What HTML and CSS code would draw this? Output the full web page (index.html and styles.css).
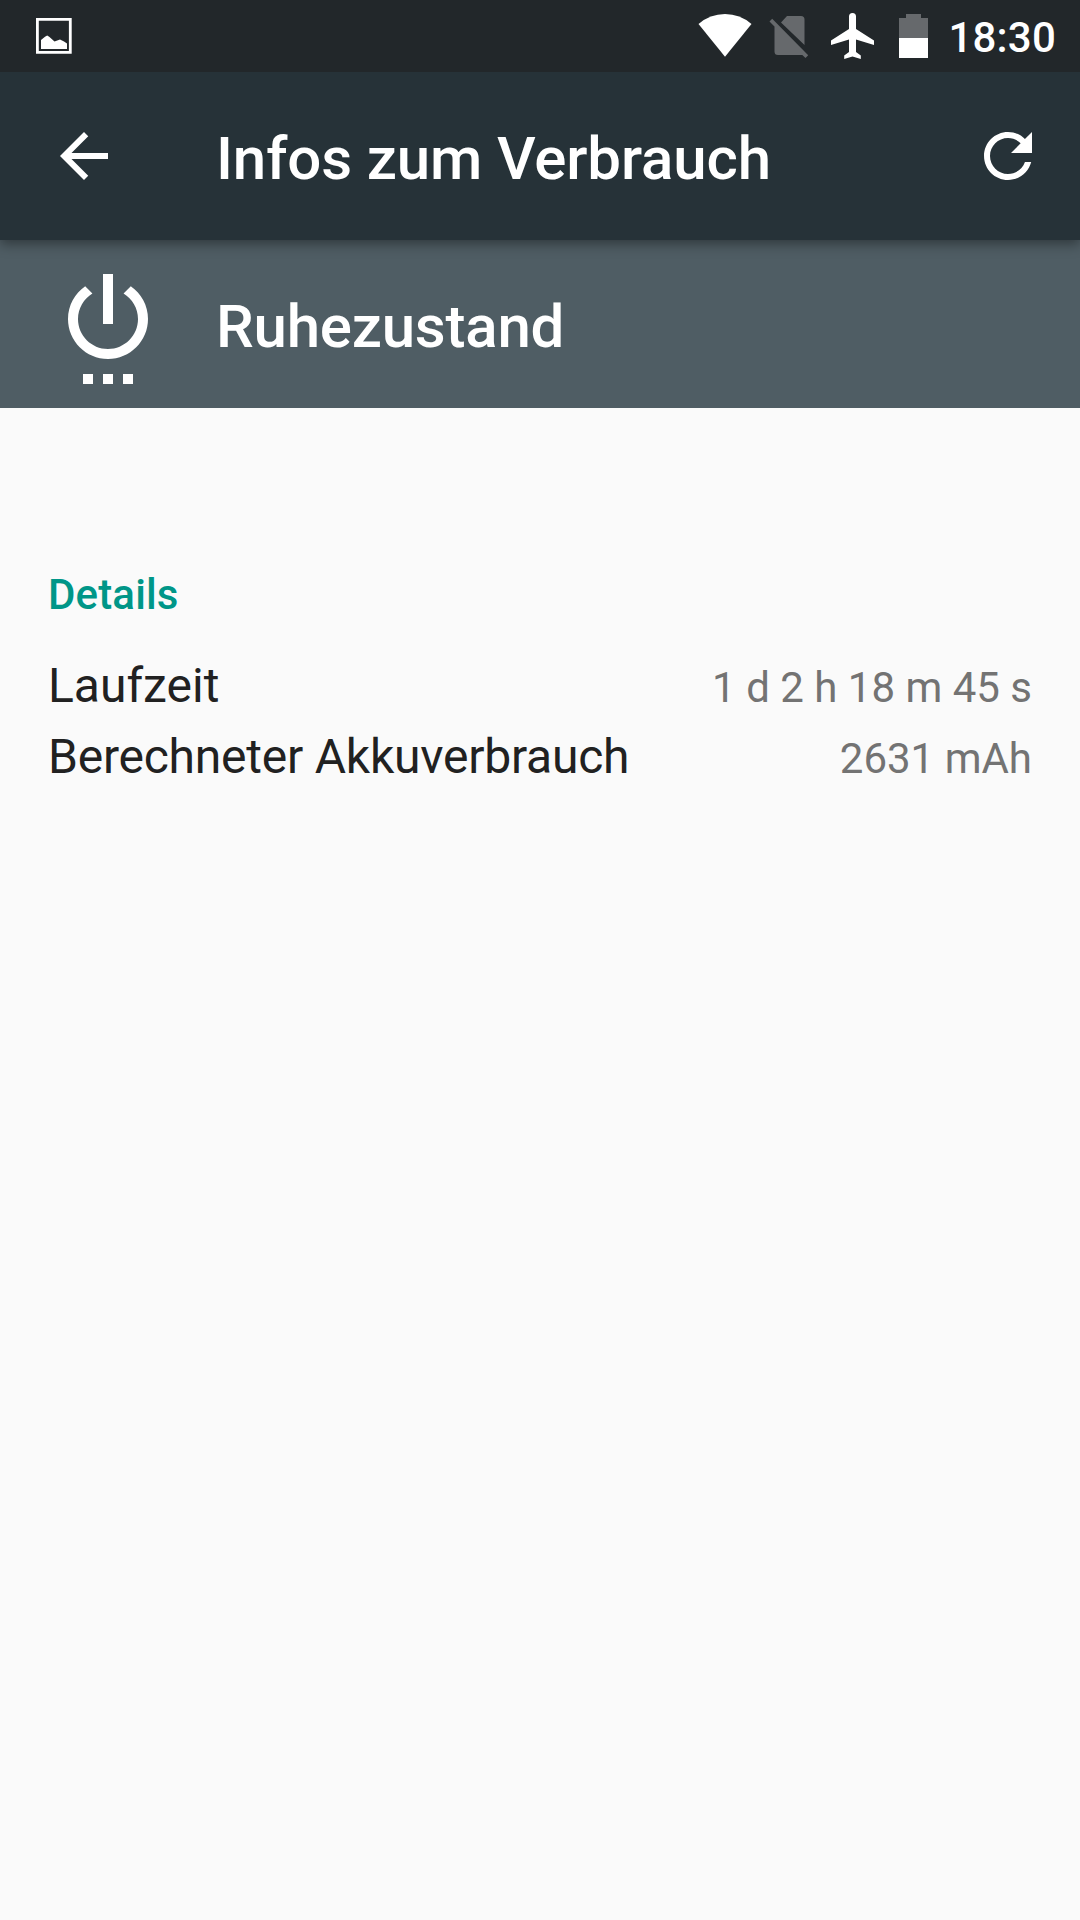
FILE: index.html
```html
<!DOCTYPE html>
<html lang="de">
<head>
<meta charset="utf-8">
<title>Infos zum Verbrauch</title>
<link rel="stylesheet" href="styles.css">
</head>
<body>
<header class="status-bar">
  <svg class="status-notification" width="36" height="36" viewBox="0 0 36 36"><path fill="none" stroke="#fff" stroke-width="2.8" d="M1.400 1.400h32.900v32.900H1.400z"/><path fill="#fff" d="M5 22l4-3.200 2.200-1.300L13.500 19l5 4.500 5.500-2L28 23.500l3 2V31H5z"/></svg>
  <div class="status-icons">
    <svg class="icon-wifi" width="54" height="72" viewBox="0 0 54 72"><path fill="#fff" d="M.5 24Q12 14 27 14T53.500 24L27 56.800z"/></svg>
    <svg class="icon-sim" width="40" height="72" viewBox="0 0 40 72"><path fill="#66696c" d="M12 22.500l6-6.500h14q3.500 0 3.500 3.500v25.500zM.500 21.500l2.700-2.700 36 36.500-2.700 2.700-3.200-3H9q-3.500 0-3.500-3.500V26.500z"/></svg>
    <svg class="icon-plane" width="43" height="72" viewBox="0 0 43 72"><path fill="#fff" d="M43 45v-4.600L25 29V16.500a3.500 3.500 0 0 0-7 0V29L0 40.400V45l18-5.500v12.400l-4.800 3.500V59l8.300-2.500 8.300 2.500v-3.600L25 51.900V39.500z"/></svg>
    <svg class="icon-battery" width="29" height="72" viewBox="0 0 29 72"><path fill="#66696c" d="M0 18h7v-4h15v4h7v20H0z"/><path fill="#fff" d="M0 38h29v20H0z"/></svg>
  </div>
  <time class="clock">18:30</time>
</header>
<div class="app-bar">
  <svg class="action-icon" viewBox="0 0 24 24"><path d="M20 11H7.830l5.590-5.590L12 4l-8 8 8 8 1.410-1.410L7.830 13H20z"/></svg>
  <h1 class="heading">Infos zum Verbrauch</h1>
  <svg class="action-icon" viewBox="0 0 24 24"><path d="M17.650 6.350C16.200 4.900 14.210 4 12 4c-4.420 0-7.990 3.580-7.990 8s3.570 8 7.990 8c3.730 0 6.840-2.550 7.730-6h-2.080c-.820 2.330-3.040 4-5.650 4-3.310 0-6-2.690-6-6s2.690-6 6-6c1.660 0 3.140.690 4.220 1.780L13 11h7V4z"/></svg>
</div>
<main>
  <section class="entry">
    <svg class="entry-icon" viewBox="0 0 24 24"><path d="M7 24h2v-2H7zm4 0h2v-2h-2zm2-22h-2v10h2zm3.560 2.440l-1.450 1.450C16.840 6.940 18 8.830 18 11c0 3.310-2.690 6-6 6s-6-2.690-6-6c0-2.170 1.160-4.060 2.880-5.120L7.440 4.440C5.360 5.880 4 8.280 4 11c0 4.420 3.580 8 8 8s8-3.580 8-8c0-2.720-1.360-5.120-3.440-6.560zM15 24h2v-2h-2z"/></svg>
    <h2 class="heading">Ruhezustand</h2>
  </section>
  <section class="details">
    <h3 class="details-title">Details</h3>
    <dl class="details-list">
      <div class="row"><dt>Laufzeit</dt><dd>1 d 2 h 18 m 45 s</dd></div>
      <div class="row"><dt class="long-label">Berechneter Akkuverbrauch</dt><dd>2631 mAh</dd></div>
    </dl>
  </section>
</main>
</body>
</html>
```
FILE: styles.css
```css
* { box-sizing: border-box; }
body {
  margin: 0;
  min-height: 1920px;
  background: #fafafa;
  color: #212121;
  font-family: Roboto, sans-serif;
}
h1, h2, h3, dl, dd { margin: 0; }
svg { display: block; flex: none; }
.status-bar {
  position: relative;
  z-index: 1;
  display: flex;
  align-items: center;
  height: 72px;
  padding: 0 24px 0 36px;
  background: #22272a;
}
.status-icons { display: flex; margin-left: auto; }
.icon-sim { margin-left: 17px; }
.icon-plane { margin-left: 22px; }
.icon-battery { margin-left: 25px; }
.clock {
  margin-left: 20px;
  padding-top: 3px;
  color: #fff;
  font-size: 42px;
  font-weight: 500;
  letter-spacing: .2px;
  line-height: 50px;
}
.app-bar {
  position: relative;
  display: flex;
  align-items: center;
  height: 168px;
  padding: 0 36px 0 48px;
  background: #263238;
  box-shadow: 0 4px 12px rgba(0, 0, 0, .4);
}
.action-icon { width: 72px; height: 72px; fill: #fff; }
.heading {
  flex: 1;
  padding-top: 5px;
  color: #fff;
  font-size: 60px;
  font-weight: 500;
  letter-spacing: -.12px;
  line-height: 72px;
}
.app-bar .heading { margin-left: 96px; }
.entry {
  display: flex;
  align-items: center;
  height: 168px;
  padding-left: 48px;
  background: #4f5d64;
}
.entry-icon { width: 120px; height: 120px; fill: #fff; }
.entry .heading { margin-left: 48px; letter-spacing: -.22px; }
.details { padding: 162px 48px 0; }
.details-title {
  color: #009688;
  font-size: 42px;
  font-weight: 500;
  letter-spacing: .15px;
  line-height: 50px;
}
.details-list { padding-top: 30px; }
.row {
  display: flex;
  align-items: baseline;
  justify-content: space-between;
  height: 71px;
  font-size: 48px;
  line-height: 71px;
}
.long-label { letter-spacing: -.23px; }
.row dd { color: #737373; font-size: 42px; line-height: 60px; }
```
